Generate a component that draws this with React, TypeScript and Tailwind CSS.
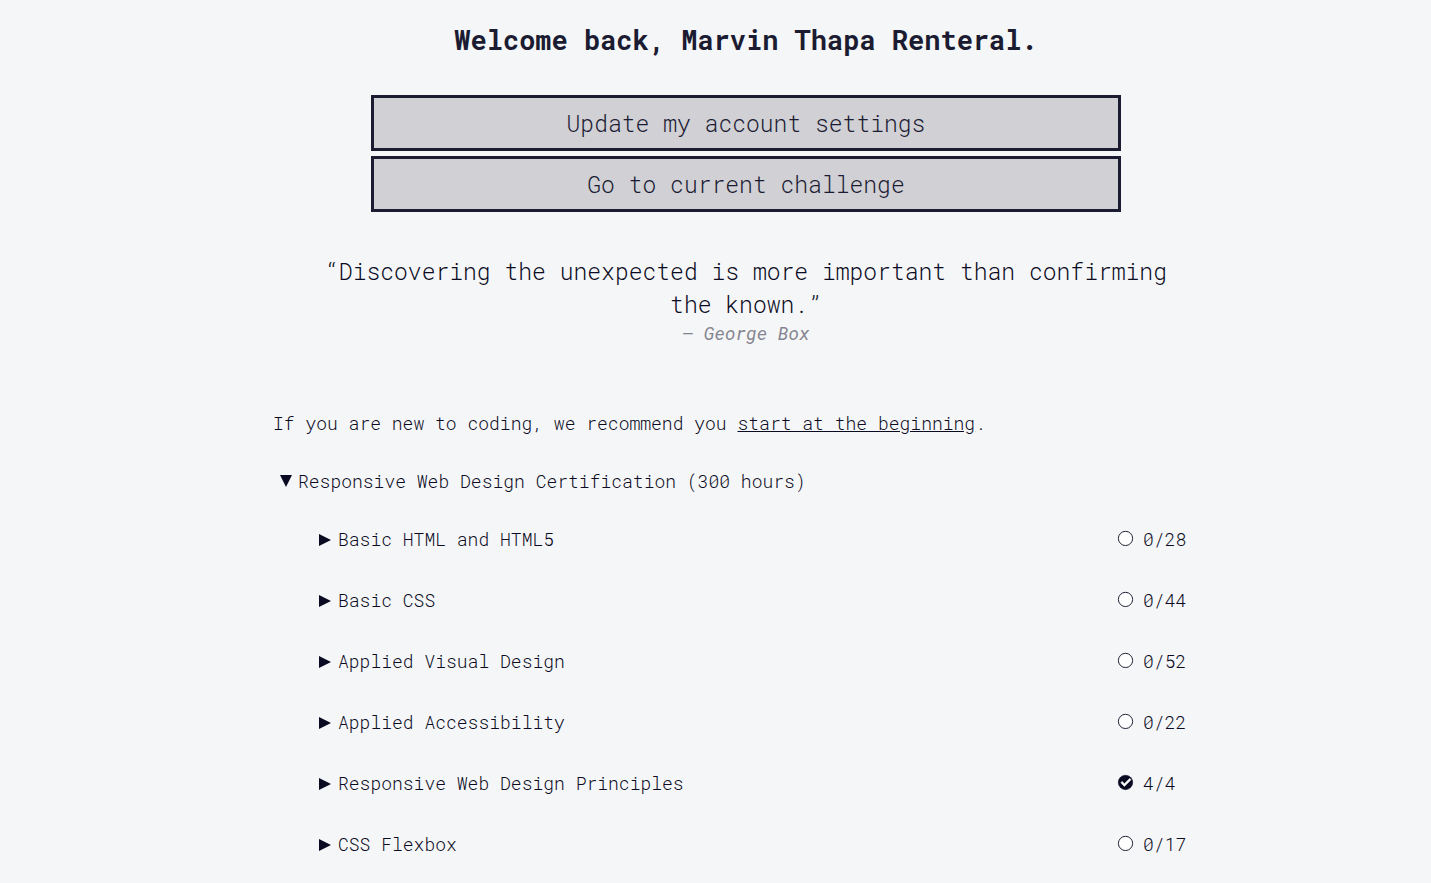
import { useState } from "react";

type Block = { title: string; done: number; total: number };

const blocks: Block[] = [
  { title: "Basic HTML and HTML5", done: 0, total: 28 },
  { title: "Basic CSS", done: 0, total: 44 },
  { title: "Applied Visual Design", done: 0, total: 52 },
  { title: "Applied Accessibility", done: 0, total: 22 },
  { title: "Responsive Web Design Principles", done: 4, total: 4 },
  { title: "CSS Flexbox", done: 0, total: 17 },
];

function Caret({ open }: { open: boolean }) {
  return (
    <svg viewBox="0 0 12 12" className="mt-px size-3 shrink-0 overflow-visible fill-[#0a0a23]" aria-hidden="true">
      {open ? <path d="M0-1h12L6 11z" /> : <path d="M0 0v12l12-6z" />}
    </svg>
  );
}

function StatusIcon({ complete }: { complete: boolean }) {
  return (
    <svg viewBox="0 0 200 200" className="mb-px size-[15px] shrink-0 overflow-visible" aria-hidden="true">
      {complete ? (
        <>
          <circle cx="100" cy="99" r="96" fill="#0a0a23" stroke="#0a0a23" strokeWidth="7" />
          <path d="M39 103l16-18 30 31 72-71 16 19-88 88z" fill="#fff" stroke="#fff" strokeWidth="8" />
        </>
      ) : (
        <circle cx="100" cy="99" r="95" fill="#fff" stroke="#0a0a23" strokeWidth="12" />
      )}
    </svg>
  );
}

function BlockRow({ block }: { block: Block }) {
  const [open, setOpen] = useState(false);
  return (
    <li>
      <button
        type="button"
        aria-expanded={open}
        onClick={() => setOpen(!open)}
        className="flex h-[61px] w-full items-center justify-between pb-px text-left"
      >
        <span className="flex items-center gap-[7px]">
          <Caret open={open} />
          {block.title}
        </span>
        <span className="flex w-[101px] items-center gap-[10px]">
          <StatusIcon complete={block.done === block.total} />
          {block.done}/{block.total}
        </span>
      </button>
    </li>
  );
}

export default function App() {
  const [open, setOpen] = useState(true);
  return (
    <div className="min-h-screen bg-[#f5f6f7] pl-[61px] font-['Roboto_Mono','Liberation_Mono',monospace] text-[18px] leading-[25px] font-light text-[#0a0a23]">
      <main className="mx-auto max-w-[946px] pt-[25px]">
        <h1 className="text-center text-[27px] leading-[30px] font-bold text-[#1b1b32]">
          Welcome back, Marvin Thapa Renteral.
        </h1>

        <div className="mx-auto mt-[40px] flex max-w-[750px] flex-col gap-[5px] text-center text-[23px] leading-[30px] text-[#1b1b32]">
          <a href="#settings" className="border-3 border-[#1b1b32] bg-[#d0d0d5] py-[10px]">
            Update my account settings
          </a>
          <a href="#challenge" className="border-3 border-[#1b1b32] bg-[#d0d0d5] py-[10px]">
            Go to current challenge
          </a>
        </div>

        <figure className="mx-auto mt-[43px] max-w-[870px] text-center">
          <blockquote className="text-[23px] leading-[33px]">
            “Discovering the unexpected is more important than confirming the known.”
          </blockquote>
          <figcaption className="font-normal text-[#858591] italic">
            <span className="not-italic">–</span> George Box
          </figcaption>
        </figure>

        <p className="mt-[65px]">
          If you are new to coding, we recommend you{" "}
          <a href="#beginning" className="underline">
            start at the beginning
          </a>
          .
        </p>

        <section className="mt-[33px]">
          <h2>
            <button
              type="button"
              aria-expanded={open}
              onClick={() => setOpen(!open)}
              className="flex items-center gap-[6px] pl-[7px] text-left"
            >
              <Caret open={open} />
              Responsive Web Design Certification (300 hours)
            </button>
          </h2>
          {open && (
            <ul className="mt-[15px] pl-[46px]">
              {blocks.map((block) => (
                <BlockRow key={block.title} block={block} />
              ))}
            </ul>
          )}
        </section>
      </main>
    </div>
  );
}
